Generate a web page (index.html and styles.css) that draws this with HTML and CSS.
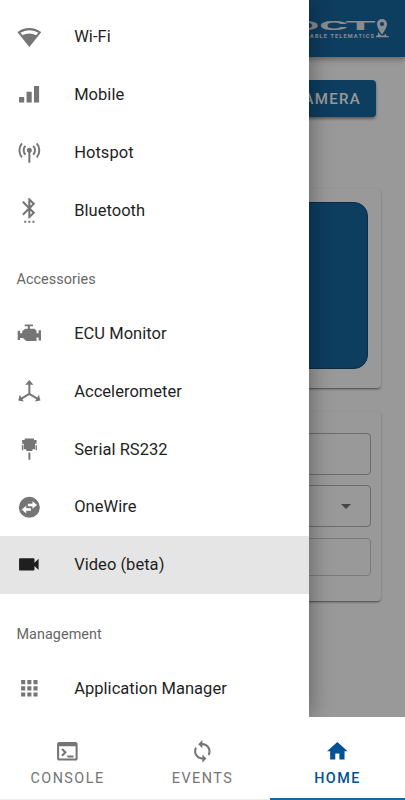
FILE: index.html
```html
<!DOCTYPE html>
<html lang="en">

<head>
  <meta charset="UTF-8">
  <meta name="viewport" content="width=device-width, initial-scale=1.0">
  <title>Home</title>
  <link rel="stylesheet" href="styles.css">
</head>

<body>
  <div class="page">
    <header class="app-bar">
      <svg class="logo" width="96" height="28" viewBox="0 0 96 28">
        <g class="logo-name">
          <text x="-6" y="16" textLength="24" lengthAdjust="spacingAndGlyphs">D</text>
          <text x="18" y="16" textLength="29" lengthAdjust="spacingAndGlyphs">C</text>
          <text x="44" y="16" textLength="31" lengthAdjust="spacingAndGlyphs">T</text>
        </g>
        <text class="logo-tagline" x="9" y="23.600" textLength="64">ABLE TELEMATICS</text>
        <path d="M81 5a5 5 0 0 0-5 5c0 4.500 5 10.500 5 10.500s5-6 5-10.500a5 5 0 0 0-5-5zm0 3a2 2 0 1 1 0 4 2 2 0 0 1 0-4z" fill-rule="evenodd" />
        <path d="M77 18l3 3.500h3l2-2v2l3 1v.8H75V22l2-1z" />
      </svg>
    </header>

    <main class="content">
      <button class="camera-button">CAMERA</button>

      <div class="card preview-card">
        <div class="preview"></div>
      </div>

      <div class="card form-card">
        <div class="field"></div>
        <div class="field select">
          <svg width="24" height="24" viewBox="0 0 24 24"><path d="M7 10l5 5 5-5z" /></svg>
        </div>
        <div class="field disabled"></div>
      </div>
    </main>
  </div>

  <div class="backdrop"></div>

  <aside class="drawer">
    <ul class="menu">
      <li class="menu-item">
        <svg class="icon" viewBox="0 0 24 24"><path fill-rule="evenodd" d="M12 3C7.800 3 3.700 4.400.5 7L12 21.300 23.500 7C20.300 4.400 16.200 3 12 3zm0 2c3.100 0 6.100.9 8.700 2.500L18.600 10A13.400 13.400 0 0 0 12 8.200c-2.400 0-4.700.7-6.600 1.800L3.300 7.500A16.500 16.500 0 0 1 12 5z" /></svg>
        <span>Wi-Fi</span>
      </li>
      <li class="menu-item">
        <svg class="icon" viewBox="0 0 24 24"><path d="M2 14.500h5V20H2zM9.300 9.500h5V20h-5zM16.500 4h5v16h-5z" /></svg>
        <span>Mobile</span>
      </li>
      <li class="menu-item">
        <svg class="icon" viewBox="0 0 24 24"><path d="M12 7.500a2.500 2.500 0 0 1 1 4.800V22h-2v-9.700a2.500 2.500 0 0 1 1-4.800z" /><path class="stroke" d="M8.200 5.700a6.300 6.300 0 0 0 0 8.600M15.800 5.700a6.300 6.300 0 0 1 0 8.600M4.800 3.200a10.500 10.500 0 0 0 0 13.600M19.200 3.200a10.500 10.500 0 0 1 0 13.600" /></svg>
        <span>Hotspot</span>
      </li>
      <li class="menu-item">
        <svg class="icon" viewBox="0 0 24 24"><path d="M11 24h2v-2h-2v2zm-4 0h2v-2H7v2zm8 0h2v-2h-2v2zm2.710-18.290L12 0h-1v7.590L6.410 3 5 4.410 10.590 10 5 15.590 6.410 17 11 12.410V20h1l5.710-5.710-4.300-4.290 4.300-4.290zM13 3.830l1.880 1.880L13 7.590V3.830zm1.880 10.460L13 16.170v-3.760l1.880 1.880z" /></svg>
        <span>Bluetooth</span>
      </li>
    </ul>

    <h2 class="menu-title">Accessories</h2>
    <ul class="menu">
      <li class="menu-item">
        <svg class="icon" viewBox="0 0 24 24"><path d="M7.500 3.500h8v1.600h-3V7.500H17l2 2V12h2V9h2.300v10H21v-3h-2v3.500H9l-3.300-3H3v2H.7v-9H3V12h2v-2l3-2.500h2.500V5.100h-3z" /></svg>
        <span>ECU Monitor</span>
      </li>
      <li class="menu-item">
        <svg class="icon" viewBox="0 0 24 24"><path class="stroke" d="M12 3v11.500L3.500 19.500M12 14.500l8.500 5" /><path d="M12 1l4 4.500H8zM1.200 20.800l1.500-5.400 3.900 6.400zM22.800 20.800l-1.500-5.400-3.900 6.400z" /></svg>
        <span>Accelerometer</span>
      </li>
      <li class="menu-item">
        <svg class="icon" viewBox="0 0 24 24"><path d="M7.500 1.500h9v1.300H19v3.700h-1.500V12H15v1.500H9V12H6.500V6.500H5V2.800h2.500zM4.700 8h1.300v5H4.700zM18 8h1.300v5H18zM11.100 15h1.900v7h-1.900z" /></svg>
        <span>Serial RS232</span>
      </li>
      <li class="menu-item">
        <svg class="icon" viewBox="0 0 24 24"><path fill-rule="evenodd" d="M12 1.800a10.200 10.200 0 1 0 0 20.400 10.200 10.200 0 0 0 0-20.400zM15 6l4.500 3.700-4.500 3.700v-2.500h-4.500V8.500H15zM9 10.500V13h4.500v2.400H9v2.500L4.500 14.200z" /></svg>
        <span>OneWire</span>
      </li>
      <li class="menu-item selected">
        <svg class="icon" viewBox="0 0 24 24"><path d="M17 10.500V7c0-.55-.45-1-1-1H3c-.55 0-1 .45-1 1v10c0 .55.45 1 1 1h13c.55 0 1-.45 1-1v-3.500l4 4v-11l-4 4z" /></svg>
        <span>Video (beta)</span>
      </li>
    </ul>

    <h2 class="menu-title">Management</h2>
    <ul class="menu">
      <li class="menu-item">
        <svg class="icon" viewBox="0 0 24 24"><path d="M4 8h4V4H4v4zm6 12h4v-4h-4v4zm-6 0h4v-4H4v4zm0-6h4v-4H4v4zm6 0h4v-4h-4v4zm6-10v4h4V4h-4zm-6 4h4V4h-4v4zm6 6h4v-4h-4v4zm0 6h4v-4h-4v4z" /></svg>
        <span>Application Manager</span>
      </li>
    </ul>
  </aside>

  <nav class="bottom-nav">
    <a class="tab">
      <svg class="icon" viewBox="0 0 24 24"><path d="M20 3H4c-1.110 0-2 .9-2 2v14c0 1.100.89 2 2 2h16c1.100 0 2-.9 2-2V5c0-1.100-.89-2-2-2zm0 16H4V7h16v12zm-2-1h-6v-2h6v2zM7.500 17l-1.410-1.410L8.670 13l-2.590-2.590L7.500 9l4 4-4 4z" /></svg>
      <span>CONSOLE</span>
    </a>
    <a class="tab">
      <svg class="icon" viewBox="0 0 24 24"><path d="M12 4V1L8 5l4 4V6c3.310 0 6 2.690 6 6 0 1.010-.25 1.970-.7 2.800l1.460 1.460C19.540 15.030 20 13.570 20 12c0-4.420-3.580-8-8-8zm0 14c-3.310 0-6-2.690-6-6 0-1.010.25-1.970.7-2.800L5.240 7.740C4.460 8.970 4 10.430 4 12c0 4.420 3.580 8 8 8v3l4-4-4-4v3z" /></svg>
      <span>EVENTS</span>
    </a>
    <a class="tab active">
      <svg class="icon" viewBox="0 0 24 24"><path d="M10 20v-6h4v6h5v-8h3L12 3 2 12h3v8z" /></svg>
      <span>HOME</span>
    </a>
  </nav>
</body>

</html>
```

FILE: styles.css
```css
* {
  box-sizing: border-box;
}

body {
  font-family: Roboto, "Liberation Sans", sans-serif;
  margin: 0;
  height: 800px;
  position: relative;
  overflow: hidden;
  display: flex;
  flex-direction: column;
  background-color: #fff;
}

.page {
  flex: 1;
  min-height: 0;
  overflow: hidden;
}

.app-bar {
  display: flex;
  justify-content: flex-end;
  height: 57px;
  padding: 14px 8px 0 0;
  background-color: #17669f;
  box-shadow: 0 2px 4px rgba(0, 0, 0, .2), 0 4px 5px rgba(0, 0, 0, .14);
}

.logo {
  fill: #e6eaf0;
}

.logo-name {
  font-size: 12.500px;
  font-weight: 700;
}

.logo-tagline {
  font-size: 5.500px;
  font-weight: 700;
}

.content {
  display: flex;
  flex-direction: column;
  padding: 23px 24px 0;
}

.camera-button {
  align-self: flex-end;
  width: 110px;
  height: 37px;
  margin-right: 5px;
  padding: 0 15px;
  border: none;
  border-radius: 4px;
  background-color: #17669f;
  color: #fff;
  font-family: inherit;
  font-size: 15px;
  font-weight: 500;
  letter-spacing: 1.300px;
  text-align: right;
  box-shadow: 0 2px 3px rgba(0, 0, 0, .4);
}

.card {
  border-radius: 4px;
  box-shadow: 0 2px 2px -1px rgba(0, 0, 0, .4), 0 1px 3px rgba(0, 0, 0, .2);
}

.preview-card {
  height: 199px;
  margin-top: 72px;
  padding: 13px;
}

.preview {
  height: 167px;
  border: 1px solid #0f4a78;
  border-radius: 14px;
  background-color: #17669f;
}

.form-card {
  display: flex;
  flex-direction: column;
  gap: 10px;
  height: 189px;
  margin-top: 24px;
  padding: 21px 10px 0;
}

.field {
  display: flex;
  align-items: center;
  justify-content: flex-end;
  height: 42px;
  padding-right: 12px;
  border: 1px solid #b5b5b5;
  border-radius: 4px;
}

.select svg {
  fill: #757575;
}

.disabled {
  height: 38px;
  margin-top: 1px;
  border-color: #cdcdcd;
}

.backdrop {
  position: absolute;
  top: 0;
  left: 0;
  right: 0;
  height: 717px;
  background-color: rgba(0, 0, 0, .4);
}

.drawer {
  position: absolute;
  top: 0;
  left: 0;
  width: 309px;
  height: 717px;
  padding-top: 8px;
  overflow: hidden;
  background-color: #fff;
  box-shadow: 2px 0 20px rgba(0, 0, 0, .35);
}

.menu {
  list-style: none;
  margin: 0;
  padding: 0 0 8px;
}

.menu-item {
  display: flex;
  align-items: center;
  gap: 33px;
  height: 57.800px;
  padding-left: 16.500px;
  color: #1f1f1f;
  font-size: 16.500px;
  letter-spacing: .03px;
}

.icon {
  width: 24.700px;
  height: 24.700px;
  fill: #757575;
}

.stroke {
  fill: none;
  stroke: #757575;
  stroke-width: 1.900;
}

.menu-title {
  height: 49.500px;
  margin: 8px 0 0;
  padding-left: 16.500px;
  color: #666;
  font-size: 14.400px;
  font-weight: 400;
  letter-spacing: .05px;
  line-height: 49.500px;
}

.selected {
  background-color: #e5e5e5;
}

.selected .icon {
  fill: #1f1f1f;
}

.bottom-nav {
  position: relative;
  display: flex;
  height: 83px;
  background-color: #fff;
}

.tab {
  flex: 1;
  display: flex;
  flex-direction: column;
  align-items: center;
  gap: 6px;
  padding-top: 22px;
  border-bottom: 1px solid #eee;
  color: #757575;
  font-size: 14.400px;
  font-weight: 400;
  letter-spacing: 1.450px;
  line-height: 17px;
}

.active {
  border-bottom: 2px solid #17669f;
  color: #005294;
  font-weight: 500;
}

.active .icon {
  fill: #005294;
}
```
